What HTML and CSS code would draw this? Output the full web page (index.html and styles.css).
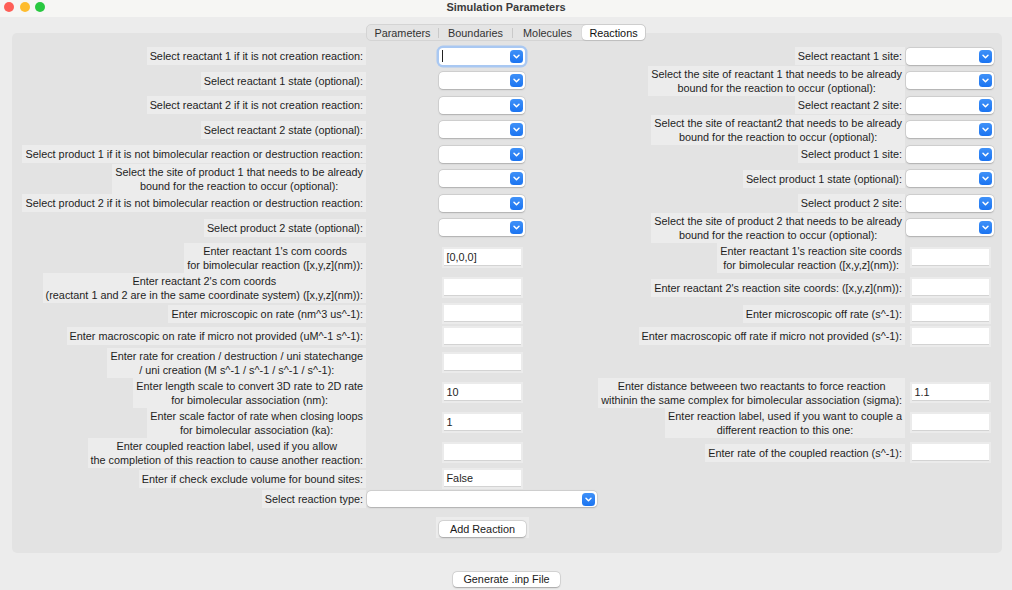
FILE: index.html
```html
<!DOCTYPE html>
<html>
<head>
<meta charset="utf-8">
<title>Simulation Parameters</title>
<link rel="stylesheet" href="styles.css">
</head>
<body>
<div class="titlebar">
  <div class="lights"><span class="light red"></span><span class="light yellow"></span><span class="light green"></span></div>
  <div class="title">Simulation Parameters</div>
  <div></div>
</div>

<div class="tabs">
  <div class="tab t1">Parameters</div>
  <span class="sep"></span>
  <div class="tab t2">Boundaries</div>
  <span class="sep"></span>
  <div class="tab t3">Molecules</div>
  <div class="tab t4 selected">Reactions</div>
</div>

<div class="panel">
  <div class="grid">
    <!-- row 1 -->
    <div class="lbl">Select reactant 1 if it is not creation reaction:</div>
    <div class="combo focus"><span class="cursor"></span><span class="arrow"><svg width="13" height="13" viewBox="0 0 13 13"><path d="M4 5.3 L6.5 7.8 L9 5.3" fill="none" stroke="#fff" stroke-width="1.5" stroke-linecap="round" stroke-linejoin="round"/></svg></span></div>
    <div class="lbl">Select reactant 1 site:</div>
    <div class="combo wide88"><span class="arrow"><svg width="13" height="13" viewBox="0 0 13 13"><path d="M4 5.3 L6.5 7.8 L9 5.3" fill="none" stroke="#fff" stroke-width="1.5" stroke-linecap="round" stroke-linejoin="round"/></svg></span></div>
    <!-- row 2 -->
    <div class="lbl">Select reactant 1 state (optional):</div>
    <div class="combo"><span class="arrow"><svg width="13" height="13" viewBox="0 0 13 13"><path d="M4 5.3 L6.5 7.8 L9 5.3" fill="none" stroke="#fff" stroke-width="1.5" stroke-linecap="round" stroke-linejoin="round"/></svg></span></div>
    <div class="lbl two">Select the site of reactant 1 that needs to be already<br>bound for the reaction to occur (optional):</div>
    <div class="combo wide88"><span class="arrow"><svg width="13" height="13" viewBox="0 0 13 13"><path d="M4 5.3 L6.5 7.8 L9 5.3" fill="none" stroke="#fff" stroke-width="1.5" stroke-linecap="round" stroke-linejoin="round"/></svg></span></div>
    <!-- row 3 -->
    <div class="lbl">Select reactant 2 if it is not creation reaction:</div>
    <div class="combo"><span class="arrow"><svg width="13" height="13" viewBox="0 0 13 13"><path d="M4 5.3 L6.5 7.8 L9 5.3" fill="none" stroke="#fff" stroke-width="1.5" stroke-linecap="round" stroke-linejoin="round"/></svg></span></div>
    <div class="lbl">Select reactant 2 site:</div>
    <div class="combo wide88"><span class="arrow"><svg width="13" height="13" viewBox="0 0 13 13"><path d="M4 5.3 L6.5 7.8 L9 5.3" fill="none" stroke="#fff" stroke-width="1.5" stroke-linecap="round" stroke-linejoin="round"/></svg></span></div>
    <!-- row 4 -->
    <div class="lbl">Select reactant 2 state (optional):</div>
    <div class="combo"><span class="arrow"><svg width="13" height="13" viewBox="0 0 13 13"><path d="M4 5.3 L6.5 7.8 L9 5.3" fill="none" stroke="#fff" stroke-width="1.5" stroke-linecap="round" stroke-linejoin="round"/></svg></span></div>
    <div class="lbl two">Select the site of reactant2 that needs to be already<br>bound for the reaction to occur (optional):</div>
    <div class="combo wide88"><span class="arrow"><svg width="13" height="13" viewBox="0 0 13 13"><path d="M4 5.3 L6.5 7.8 L9 5.3" fill="none" stroke="#fff" stroke-width="1.5" stroke-linecap="round" stroke-linejoin="round"/></svg></span></div>
    <!-- row 5 -->
    <div class="lbl">Select product 1 if it is not bimolecular reaction or destruction reaction:</div>
    <div class="combo"><span class="arrow"><svg width="13" height="13" viewBox="0 0 13 13"><path d="M4 5.3 L6.5 7.8 L9 5.3" fill="none" stroke="#fff" stroke-width="1.5" stroke-linecap="round" stroke-linejoin="round"/></svg></span></div>
    <div class="lbl">Select product 1 site:</div>
    <div class="combo wide88"><span class="arrow"><svg width="13" height="13" viewBox="0 0 13 13"><path d="M4 5.3 L6.5 7.8 L9 5.3" fill="none" stroke="#fff" stroke-width="1.5" stroke-linecap="round" stroke-linejoin="round"/></svg></span></div>
    <!-- row 6 -->
    <div class="lbl two">Select the site of product 1 that needs to be already<br>bound for the reaction to occur (optional):</div>
    <div class="combo"><span class="arrow"><svg width="13" height="13" viewBox="0 0 13 13"><path d="M4 5.3 L6.5 7.8 L9 5.3" fill="none" stroke="#fff" stroke-width="1.5" stroke-linecap="round" stroke-linejoin="round"/></svg></span></div>
    <div class="lbl">Select product 1 state (optional):</div>
    <div class="combo wide88"><span class="arrow"><svg width="13" height="13" viewBox="0 0 13 13"><path d="M4 5.3 L6.5 7.8 L9 5.3" fill="none" stroke="#fff" stroke-width="1.5" stroke-linecap="round" stroke-linejoin="round"/></svg></span></div>
    <!-- row 7 -->
    <div class="lbl">Select product 2 if it is not bimolecular reaction or destruction reaction:</div>
    <div class="combo"><span class="arrow"><svg width="13" height="13" viewBox="0 0 13 13"><path d="M4 5.3 L6.5 7.8 L9 5.3" fill="none" stroke="#fff" stroke-width="1.5" stroke-linecap="round" stroke-linejoin="round"/></svg></span></div>
    <div class="lbl">Select product 2 site:</div>
    <div class="combo wide88"><span class="arrow"><svg width="13" height="13" viewBox="0 0 13 13"><path d="M4 5.3 L6.5 7.8 L9 5.3" fill="none" stroke="#fff" stroke-width="1.5" stroke-linecap="round" stroke-linejoin="round"/></svg></span></div>
    <!-- row 8 -->
    <div class="lbl">Select product 2 state (optional):</div>
    <div class="combo"><span class="arrow"><svg width="13" height="13" viewBox="0 0 13 13"><path d="M4 5.3 L6.5 7.8 L9 5.3" fill="none" stroke="#fff" stroke-width="1.5" stroke-linecap="round" stroke-linejoin="round"/></svg></span></div>
    <div class="lbl two">Select the site of product 2 that needs to be already<br>bound for the reaction to occur (optional):</div>
    <div class="combo wide88"><span class="arrow"><svg width="13" height="13" viewBox="0 0 13 13"><path d="M4 5.3 L6.5 7.8 L9 5.3" fill="none" stroke="#fff" stroke-width="1.5" stroke-linecap="round" stroke-linejoin="round"/></svg></span></div>
    <!-- row 9 -->
    <div class="lbl two">Enter reactant 1's com coords<br>for bimolecular reaction ([x,y,z](nm)):</div>
    <div class="entry">[0,0,0]</div>
    <div class="lbl two">Enter reactant 1's reaction site coords<br>for bimolecular reaction ([x,y,z](nm)):</div>
    <div class="entry"></div>
    <!-- row 10 -->
    <div class="lbl two">Enter reactant 2's com coords<br>(reactant 1 and 2 are in the same coordinate system) ([x,y,z](nm)):</div>
    <div class="entry"></div>
    <div class="lbl">Enter reactant 2's reaction site coords: ([x,y,z](nm)):</div>
    <div class="entry"></div>
    <!-- row 11 -->
    <div class="lbl">Enter microscopic on rate (nm^3 us^-1):</div>
    <div class="entry"></div>
    <div class="lbl">Enter microscopic off rate (s^-1):</div>
    <div class="entry"></div>
    <!-- row 12 -->
    <div class="lbl">Enter macroscopic on rate if micro not provided (uM^-1 s^-1):</div>
    <div class="entry"></div>
    <div class="lbl">Enter macroscopic off rate if micro not provided (s^-1):</div>
    <div class="entry"></div>
    <!-- row 13 -->
    <div class="lbl two">Enter rate for creation / destruction / uni statechange<br>/ uni creation (M s^-1 / s^-1 / s^-1 / s^-1):</div>
    <div class="entry"></div>
    <div></div>
    <div></div>
    <!-- row 14 -->
    <div class="lbl two">Enter length scale to convert 3D rate to 2D rate<br>for bimolecular association (nm):</div>
    <div class="entry">10</div>
    <div class="lbl two">Enter distance betweeen two reactants to force reaction<br>withinin the same complex for bimolecular association (sigma):</div>
    <div class="entry">1.1</div>
    <!-- row 15 -->
    <div class="lbl two">Enter scale factor of rate when closing loops<br>for bimolecular association (ka):</div>
    <div class="entry">1</div>
    <div class="lbl two">Enter reaction label, used if you want to couple a<br>different reaction to this one:</div>
    <div class="entry"></div>
    <!-- row 16 -->
    <div class="lbl two">Enter coupled reaction label, used if you allow<br>the completion of this reaction to cause another reaction:</div>
    <div class="entry"></div>
    <div class="lbl">Enter rate of the coupled reaction (s^-1):</div>
    <div class="entry"></div>
    <!-- row 17 -->
    <div class="lbl">Enter if check exclude volume for bound sites:</div>
    <div class="entry">False</div>
    <div></div>
    <div></div>
    <!-- row 18 -->
    <div class="lbl">Select reaction type:</div>
    <div class="combo full"><span class="arrow"><svg width="13" height="13" viewBox="0 0 13 13"><path d="M4 5.3 L6.5 7.8 L9 5.3" fill="none" stroke="#fff" stroke-width="1.5" stroke-linecap="round" stroke-linejoin="round"/></svg></span></div>
    <div></div>
    <div></div>
    <!-- row 19 -->
    <div></div>
    <div class="btnwrap"><div class="btn add">Add Reaction</div></div>
    <div></div>
    <div></div>
  </div>
</div>

<div class="footer">
  <div class="btn gen">Generate .inp File</div>
</div>
</body>
</html>
```

FILE: styles.css
```css
html, body {
  margin: 0;
  padding: 0;
}
body {
  width: 1012px;
  height: 590px;
  overflow: hidden;
  background: #ececec;
  font-family: "Liberation Sans", Arial, sans-serif;
  font-size: 10.85px;
  color: #1e1e1e;
}

.titlebar {
  height: 17px;
  background: #f6f6f4;
  display: grid;
  grid-template-columns: 1fr auto 1fr;
  align-items: center;
}
.lights {
  display: flex;
  gap: 5.5px;
  padding-left: 4px;
  margin-top: -4px;
}
.light {
  width: 10px;
  height: 10px;
  border-radius: 50%;
}
.red { background: #fe5f57; }
.yellow { background: #febc2e; }
.green { background: #28c840; }
.title {
  font-weight: bold;
  font-size: 11px;
  color: #3b3b3b;
  margin-top: -3px;
}

.tabs {
  position: relative;
  z-index: 1;
  display: flex;
  align-items: center;
  width: max-content;
  margin: 7px auto 0;
  height: 17px;
  box-sizing: border-box;
  background: #e4e4e4;
  border: 1px solid #d4d4d4;
  border-radius: 5px;
  color: #333;
}
.tab {
  height: 15px;
  line-height: 16px;
  text-align: center;
}
.t1 { width: 71px; }
.t2 { width: 73px; }
.t3 { width: 69px; }
.t4 { width: 63px; }
.sep {
  width: 1px;
  height: 10px;
  background: #c9c9c9;
}
.tab.selected {
  background: #fff;
  color: #111;
  border-radius: 4px;
  box-shadow: 0 0 1px rgba(0,0,0,0.3), 0 1px 1px rgba(0,0,0,0.08);
}

.panel {
  margin: -8px 0 0 12px;
  width: 990px;
  height: 520px;
  box-sizing: border-box;
  background: #e3e3e3;
  border-radius: 5px;
  padding: 13.5px 0 0 6px;
}
.grid {
  display: grid;
  grid-template-columns: 348px 232px 307px 90px;
  grid-template-rows: 19px 30px 19px 30px 19px 30px 19px 30px 30px 30px 22.5px 22.5px 30px 30px 30px 30px 22px 19px 37px;
}

.lbl {
  justify-self: end;
  align-self: center;
  background: #ececec;
  padding: 2px 3px;
  line-height: 14px;
  text-align: center;
  white-space: nowrap;
}
.lbl.two {
  padding: 1px 3px;
}

.combo {
  justify-self: center;
  align-self: center;
  width: 86px;
  height: 17px;
  box-sizing: border-box;
  background: #fff;
  border-radius: 4px;
  box-shadow: 0 0 0 0.5px rgba(0,0,0,0.12), 0 0.5px 1.5px rgba(0,0,0,0.18);
  display: flex;
  align-items: center;
  justify-content: space-between;
  padding: 0 2px 0 3px;
}
.combo.wide88 { width: 88px; }
.combo.full {
  width: 230px;
  height: 16px;
}
.combo.focus {
  box-shadow: 0 0 0 2.5px #a9c8f2, 0 0 0 0.5px rgba(0,0,0,0.2);
}
.cursor {
  width: 1px;
  height: 12px;
  background: #222;
}
.arrow {
  margin-left: auto;
  width: 13px;
  height: 13px;
  border-radius: 3.5px;
  background: linear-gradient(#3f91f8, #1b74f1);
  display: flex;
}

.entry {
  justify-self: center;
  align-self: center;
  width: 74px;
  height: 17px;
  padding-left: 3px;
  line-height: 17px;
  background: #fff;
  border: 2px solid #ebebeb;
  box-shadow: inset 0 -1px 0 #d3d3d3;
  color: #1e1e1e;
}

.btnwrap {
  justify-self: center;
  align-self: center;
  background: #ececec;
  padding: 4px 3px 1px 3px;
  margin-left: 1px;
}
.btn {
  background: #fff;
  border-radius: 4px;
  box-shadow: 0 0 0 0.5px rgba(0,0,0,0.12), 0 0.5px 1.5px rgba(0,0,0,0.25);
  text-align: center;
  color: #1a1a1a;
}
.btn.add {
  width: 87px;
  height: 16px;
  line-height: 16px;
}
.footer {
  display: flex;
  justify-content: center;
  padding-top: 19px;
  padding-left: 1px;
}
.btn.gen {
  width: 107px;
  height: 15px;
  line-height: 15px;
}
```
